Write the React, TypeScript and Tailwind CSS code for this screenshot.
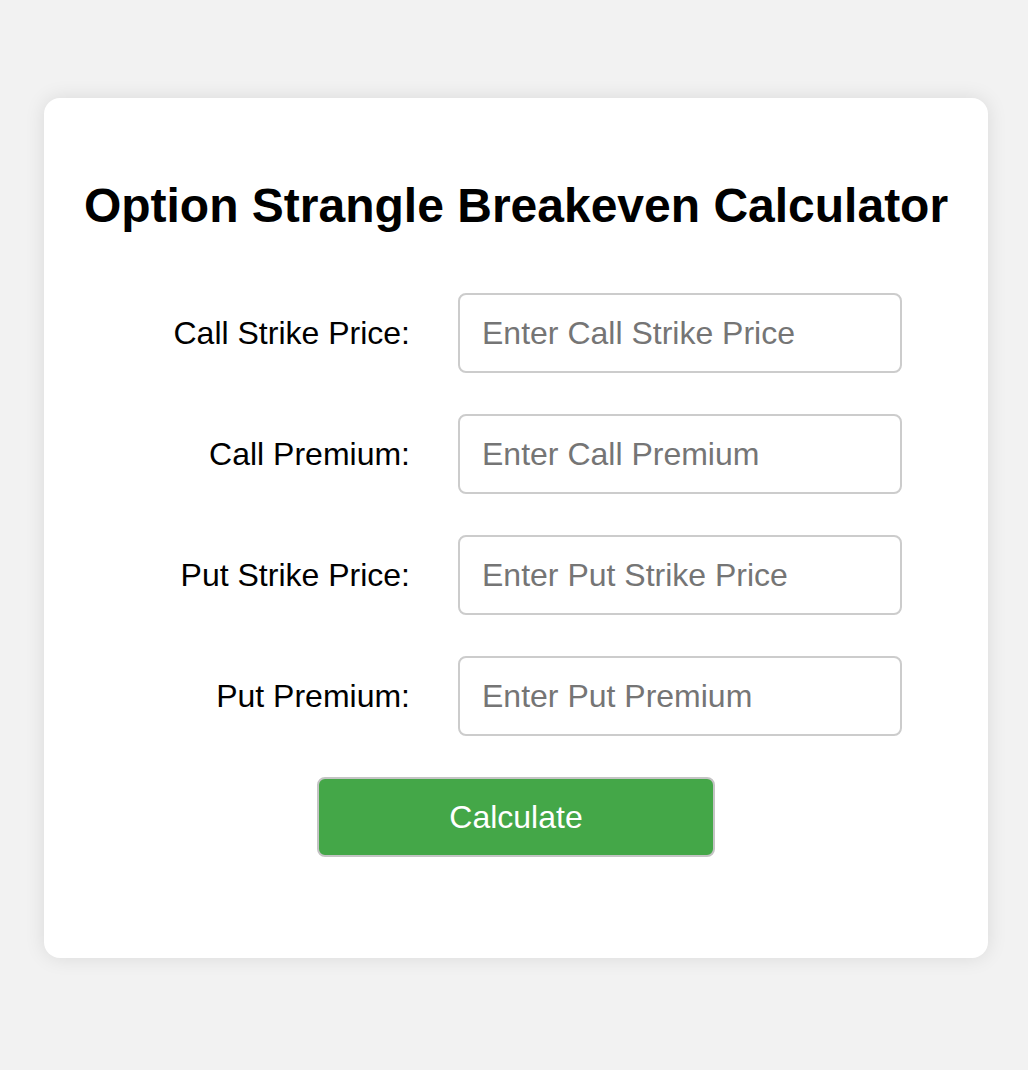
import React, { useState } from 'react';

const fields = [
  { id: 'callStrike', label: 'Call Strike Price:', placeholder: 'Enter Call Strike Price' },
  { id: 'callPremium', label: 'Call Premium:', placeholder: 'Enter Call Premium' },
  { id: 'putStrike', label: 'Put Strike Price:', placeholder: 'Enter Put Strike Price' },
  { id: 'putPremium', label: 'Put Premium:', placeholder: 'Enter Put Premium' },
];

const App: React.FC = () => {
  const [values, setValues] = useState<Record<string, string>>({});

  return (
    <div className="min-h-[1070px] bg-[#f2f2f2] pt-[98px] pl-[44px] font-['Liberation_Sans',Arial,sans-serif] text-black">
      <div className="w-[944px] h-[860px] bg-white rounded-2xl shadow-[0_0_20px_rgba(0,0,0,0.1)] pt-[80px] box-border">
        <h1 className="text-center text-[48px] leading-[55px] font-bold">
          Option Strangle Breakeven Calculator
        </h1>
        <div className="flex flex-col items-center gap-[41px] mt-[60px]">
          {fields.map((f) => (
            <div key={f.id} className="flex items-center gap-[48px]">
              <label htmlFor={f.id} className="w-[280px] text-right text-[32px]">
                {f.label}
              </label>
              <input
                id={f.id}
                type="text"
                placeholder={f.placeholder}
                value={values[f.id] || ''}
                onChange={(e) => setValues({ ...values, [f.id]: e.target.value })}
                className="w-[444px] h-[80px] box-border border-2 border-[#cccccc] rounded-lg px-[22px] text-[32px] placeholder:text-[#757575] outline-none"
              />
            </div>
          ))}
          <button
            type="button"
            className="w-[398px] h-[80px] box-border bg-[#44a748] text-white text-[32px] border-2 border-[#c4c4c4] rounded-lg"
          >
            Calculate
          </button>
        </div>
      </div>
    </div>
  );
};

export default App;
